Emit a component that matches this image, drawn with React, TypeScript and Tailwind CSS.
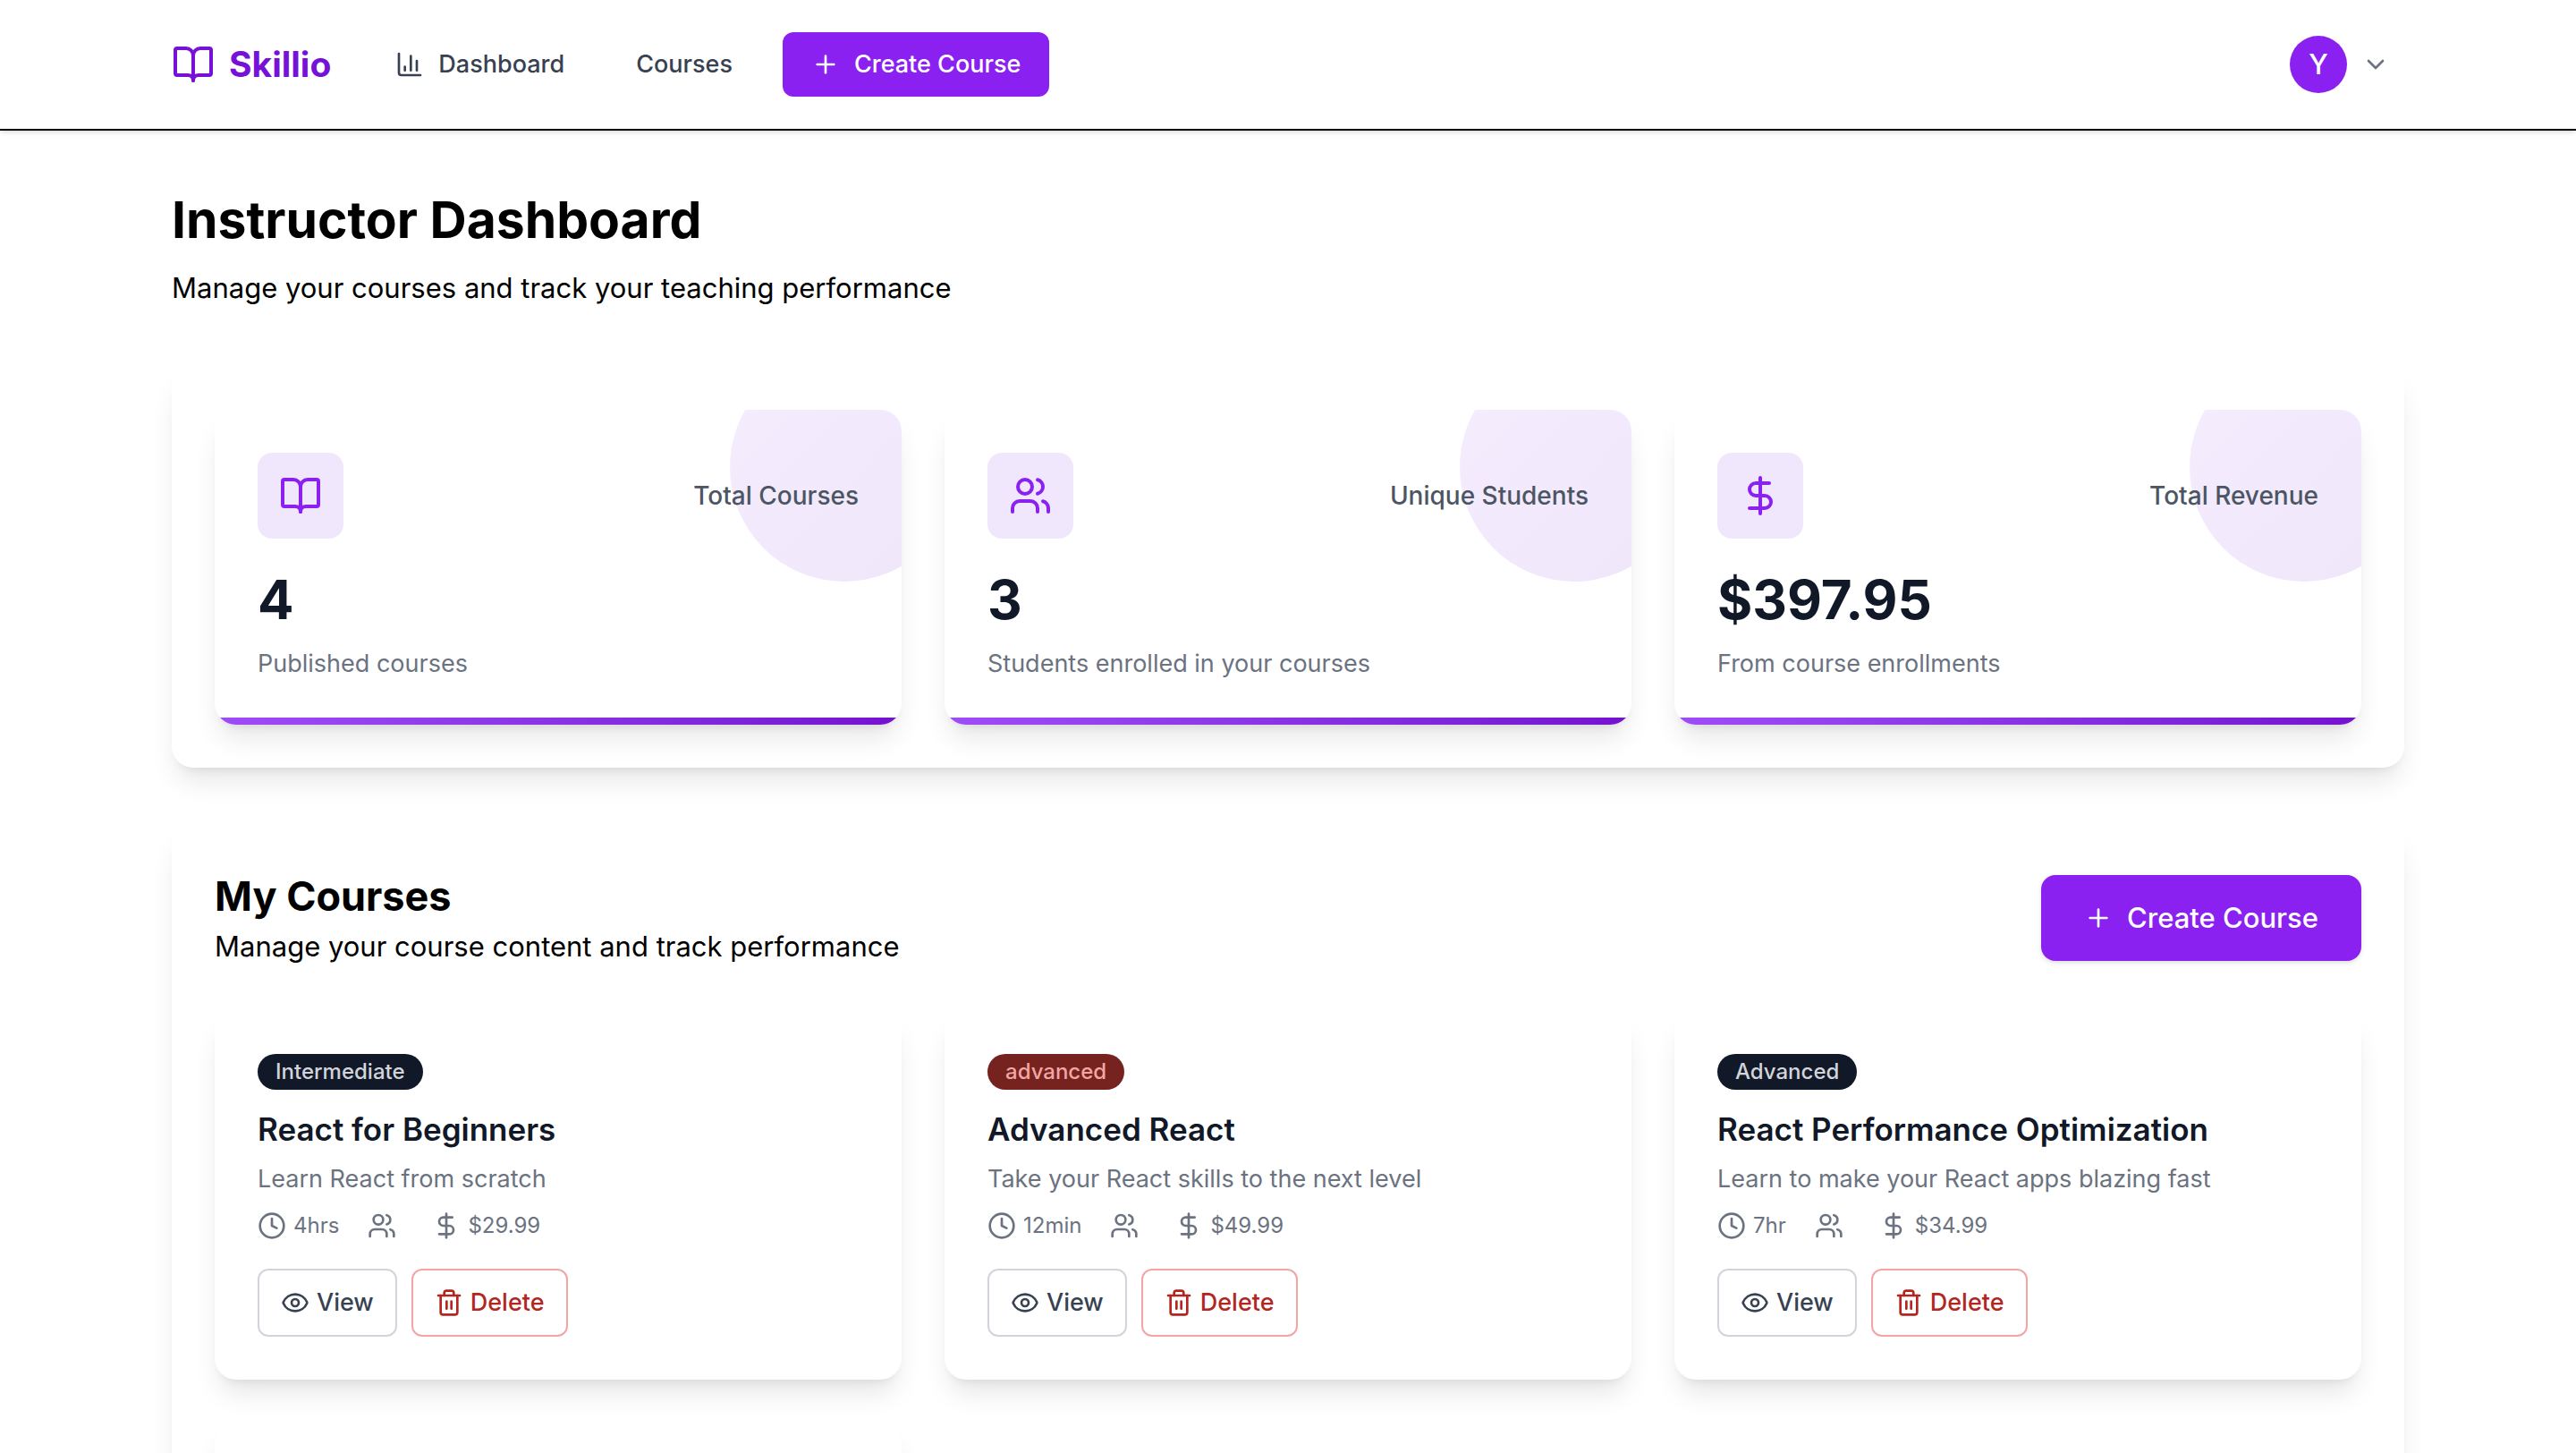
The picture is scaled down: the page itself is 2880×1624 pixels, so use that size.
import React from "react";
import {
  BookOpen,
  ChartColumn,
  ChevronDown,
  Clock,
  DollarSign,
  Eye,
  Plus,
  Trash2,
  Users,
  type LucideIcon,
} from "lucide-react";

type Stat = { label: string; value: string; note: string; icon: LucideIcon };

const stats: Stat[] = [
  { label: "Total Courses", value: "4", note: "Published courses", icon: BookOpen },
  { label: "Unique Students", value: "3", note: "Students enrolled in your courses", icon: Users },
  { label: "Total Revenue", value: "$397.95", note: "From course enrollments", icon: DollarSign },
];

type Course = {
  level: string;
  highlighted?: boolean;
  title: string;
  description: string;
  duration: string;
  price: string;
};

const courses: Course[] = [
  {
    level: "Intermediate",
    title: "React for Beginners",
    description: "Learn React from scratch",
    duration: "4hrs",
    price: "$29.99",
  },
  {
    level: "advanced",
    highlighted: true,
    title: "Advanced React",
    description: "Take your React skills to the next level",
    duration: "12min",
    price: "$49.99",
  },
  {
    level: "Advanced",
    title: "React Performance Optimization",
    description: "Learn to make your React apps blazing fast",
    duration: "7hr",
    price: "$34.99",
  },
];

const card = "rounded-3xl bg-white shadow-[0_20px_30px_-6px_rgba(0,0,0,0.1),0_8px_12px_-8px_rgba(0,0,0,0.1)]";

function Header() {
  return (
    <header className="border-b-2 border-black bg-white shadow-[0_2px_6px_rgba(0,0,0,0.1),0_2px_4px_-2px_rgba(0,0,0,0.1)]">
      <div className="mx-auto flex h-36 max-w-[2560px] items-center justify-between px-8">
        <div className="flex items-center gap-12">
          <a href="#" className="flex items-center gap-4 text-[#7612d6]">
            <BookOpen className="size-12" />
            <span className="text-[39px] leading-14 font-bold">Skillio</span>
          </a>
          <nav className="flex items-center gap-8 text-[27px] leading-10 font-medium text-[#374151]">
            <a href="#" className="flex items-center gap-4 px-6 py-4">
              <ChartColumn className="size-8" />
              Dashboard
            </a>
            <a href="#" className="px-6 py-4">
              Courses
            </a>
            <a href="#" className="flex items-center gap-4 rounded-xl bg-[#8b21f1] px-8 py-4 text-white">
              <Plus className="size-8" />
              Create Course
            </a>
          </nav>
        </div>
        <button type="button" aria-label="Account menu" className="flex items-center gap-4 p-4">
          <span className="flex size-16 items-center justify-center rounded-full bg-[#8b21f1] text-[31px] leading-12 font-medium text-white">
            Y
          </span>
          <ChevronDown className="size-8 text-[#6b7280]" />
        </button>
      </div>
    </header>
  );
}

function StatCard({ label, value, note, icon: Icon }: Stat) {
  return (
    <article className={`${card} relative overflow-hidden p-12`}>
      <div className="absolute -top-16 -right-16 size-64 rounded-full bg-linear-to-br from-[#f5eefe] to-[#efe5fa]" />
      <div className="relative mb-8 flex items-center justify-between">
        <div className="flex size-24 items-center justify-center rounded-2xl bg-[#f0e7fd]">
          <Icon className="size-12 text-[#8b21f1]" />
        </div>
        <h3 className="text-[28px] leading-10 font-medium text-[#4b5563]">{label}</h3>
      </div>
      <p className="text-[60px] leading-18 font-bold text-[#111827]">{value}</p>
      <p className="mt-4 text-[27px] leading-10 text-[#6b7280]">{note}</p>
      <div className="absolute inset-x-0 bottom-0 h-2 bg-linear-to-r from-[#9f4bf8] to-[#7410d0]" />
    </article>
  );
}

function CourseCard({ level, highlighted, title, description, duration, price }: Course) {
  return (
    <article className={`${card} p-12`}>
      <span
        className={`flex h-10 w-fit items-center rounded-full px-5 text-[24px] leading-8 font-medium ${
          highlighted ? "bg-[#76221f] text-[#f2a6a4]" : "bg-[#111827] text-[#d1d5db]"
        }`}
      >
        {level}
      </span>
      <h3 className="mt-4 text-[35px] leading-14 font-semibold text-[#111827]">{title}</h3>
      <p className="mt-2 text-[27px] leading-10 text-[#6b7280]">{description}</p>
      <div className="mt-4 flex items-center gap-8 text-[24px] leading-8 text-[#6b7280]">
        <span className="flex items-center gap-2">
          <Clock className="size-8" />
          {duration}
        </span>
        <span className="flex items-center pr-2">
          <Users className="size-8" />
        </span>
        <span className="flex items-center gap-2">
          <DollarSign className="size-8" />
          {price}
        </span>
      </div>
      <div className="mt-8 flex gap-4 text-[27px] leading-10 font-medium">
        <button
          type="button"
          className="flex items-center gap-2 rounded-xl border-2 border-[#d1d5db] px-6 py-4 text-[#374151]"
        >
          <Eye className="size-8" />
          View
        </button>
        <button
          type="button"
          className="flex items-center gap-2 rounded-xl border-2 border-[#f2a6a4] px-6 py-4 text-[#b3261f]"
        >
          <Trash2 className="size-8" />
          Delete
        </button>
      </div>
    </article>
  );
}

export default function App() {
  return (
    <div className="h-screen overflow-hidden bg-white font-['Inter',sans-serif] text-black antialiased">
      <Header />
      <main className="mx-auto flex max-w-[2560px] flex-col gap-16 px-8 py-16">
        <div>
          <h1 className="text-[57px] leading-18 font-bold">Instructor Dashboard</h1>
          <p className="mt-4 text-[31px] leading-12">Manage your courses and track your teaching performance</p>
        </div>

        <section className={`${card} grid grid-cols-3 gap-12 p-12`} aria-label="Statistics">
          {stats.map((stat) => (
            <StatCard key={stat.label} {...stat} />
          ))}
        </section>

        <section className={`${card} p-12`}>
          <div className="mb-12 flex items-center justify-between">
            <div>
              <h2 className="text-[45px] leading-16 font-bold">My Courses</h2>
              <p className="text-[31px] leading-12">Manage your course content and track performance</p>
            </div>
            <button
              type="button"
              className="flex items-center gap-4 rounded-2xl bg-[#8b21f1] px-12 py-6 text-[31px] leading-12 font-medium text-white shadow-[0_2px_6px_rgba(0,0,0,0.1),0_2px_4px_-2px_rgba(0,0,0,0.1)]"
            >
              <Plus className="size-8" />
              Create Course
            </button>
          </div>
          <div className="grid grid-cols-3 gap-12">
            {courses.map((course) => (
              <CourseCard key={course.title} {...course} />
            ))}
            <article className={`${card} min-h-96`} />
          </div>
        </section>
      </main>
    </div>
  );
}
